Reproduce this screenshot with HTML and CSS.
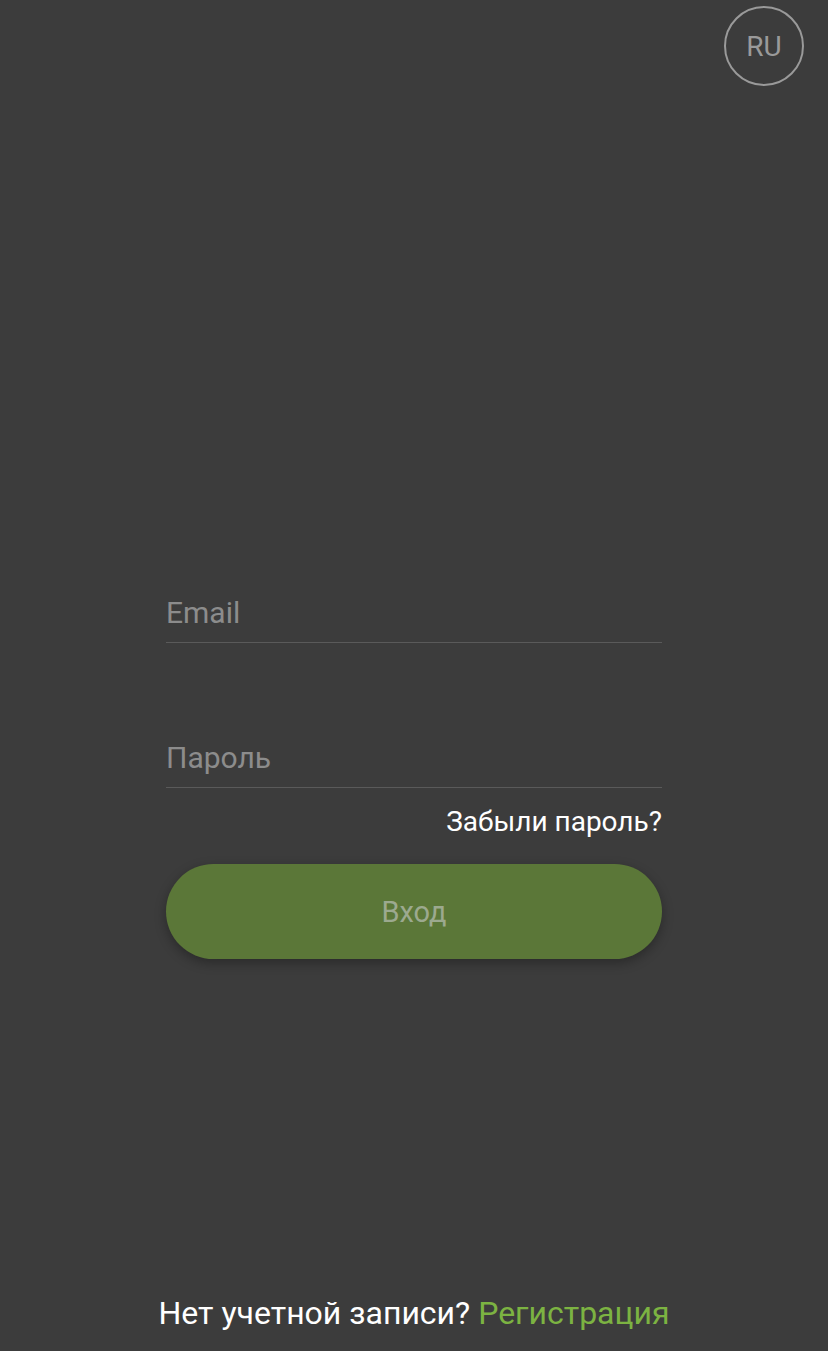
FILE: index.html
```html
<!DOCTYPE html>
<html lang="ru">
<head>
    <meta charset="UTF-8">
    <meta name="viewport" content="width=device-width, initial-scale=1.0">
    <title>Вход</title>
    <link rel="stylesheet" href="styles.css">
</head>
<body>
    <div class="page">
        <!-- выбор языка -->
        <div class="top-bar">
            <button type="button" class="lang-button">RU</button>
        </div>

        <!-- форма входа -->
        <form class="login-form">
            <input type="email" class="field" placeholder="Email">
            <input type="password" class="field field-password" placeholder="Пароль">
            <div class="forgot-row">
                <a href="#" class="forgot-link">Забыли пароль?</a>
            </div>
            <button type="submit" class="login-button">Вход</button>
        </form>

        <!-- регистрация -->
        <div class="footer">
            Нет учетной записи? <a href="#" class="register-link">Регистрация</a>
        </div>
    </div>
</body>
</html>
```

FILE: styles.css
```css
html, body {
    margin: 0;
    padding: 0;
    height: 100%;
    background-color: #3c3c3c;
    font-family: Roboto, "Noto Sans", sans-serif;
}

.page {
    height: 1351px;
    display: flex;
    flex-direction: column;
    box-sizing: border-box;
}

.top-bar {
    display: flex;
    justify-content: flex-end;
    padding: 6px 24px 0 0;
}

.lang-button {
    width: 80px;
    height: 80px;
    border-radius: 50%;
    border: 2px solid #9a9a9a;
    background: transparent;
    color: #9a9a9a;
    font-family: inherit;
    font-size: 28px;
    padding: 0;
    box-sizing: border-box;
}

.login-form {
    width: 496px;
    margin: 503px auto 0;
    display: flex;
    flex-direction: column;
}

.field {
    height: 54px;
    padding: 0 0 6px;
    border: none;
    border-bottom: 1px solid #5a5a5a;
    background: transparent;
    color: #ffffff;
    font-family: inherit;
    font-size: 30px;
    outline: none;
    box-sizing: border-box;
}

.field::placeholder {
    color: #8c8c8c;
}

.field-password {
    margin-top: 91px;
}

.forgot-row {
    display: flex;
    justify-content: flex-end;
    margin-top: 18px;
    line-height: 32px;
}

.forgot-link {
    color: #ffffff;
    font-size: 28px;
    text-decoration: none;
}

.login-button {
    margin-top: 26px;
    height: 95px;
    border: none;
    border-radius: 48px;
    background-color: #5b7738;
    color: #9ca98f;
    font-family: inherit;
    font-size: 29px;
    box-shadow: 0 4px 12px rgba(0, 0, 0, 0.3);
}

.footer {
    margin-top: auto;
    padding-bottom: 19px;
    text-align: center;
    color: #ffffff;
    font-size: 32px;
    line-height: 38px;
}

.register-link {
    color: #7cb342;
    text-decoration: none;
}
```
